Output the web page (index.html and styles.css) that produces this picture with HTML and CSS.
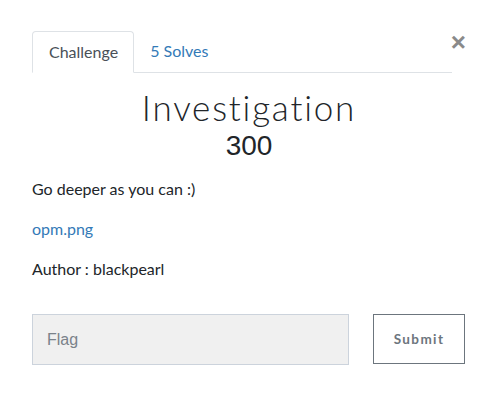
FILE: index.html
```html
<!DOCTYPE html>
<html>
<head>
<meta charset="utf-8">
<link rel="stylesheet" href="styles.css">
</head>
<body>
<div class="modal">
  <button class="close">&times;</button>
  <div class="tabs">
    <div class="tab active">Challenge</div>
    <div class="tab link">5 Solves</div>
  </div>
  <h2 class="title">Investigation</h2>
  <h3 class="value">300</h3>
  <p class="desc">Go deeper as you can :)</p>
  <p class="desc"><a class="file" href="#">opm.png</a></p>
  <p class="desc">Author : blackpearl</p>
  <div class="form">
    <input class="flag" type="text" placeholder="Flag">
    <button class="submit">Submit</button>
  </div>
</div>
</body>
</html>
```
FILE: styles.css
```css
html, body { margin: 0; padding: 0; background: #fff; }
body { width: 497px; height: 414px; font-family: Lato, "Open Sans", sans-serif; color: #212529; }
.modal { position: relative; padding: 31px 31px 0 32px; width: 434px; }
.close { position: absolute; right: 31px; top: 29px; border: 0; background: none; padding: 0; font-size: 26px; line-height: 26px; font-weight: 700; color: #8a8a8a; font-family: "Liberation Sans", Arial, sans-serif; }
.tabs { display: flex; border-bottom: 1px solid #dee2e6; height: 41px; width: 420px; }
.tab { font-size: 16px; line-height: 40px; padding: 0 16px; height: 40px; }
.tab.active { color: #495057; border: 1px solid #dee2e6; border-bottom: 1px solid #fff; border-radius: 4px 4px 0 0; background: #fff; margin-bottom: -1px; padding: 0 15px 0 16px; }
.tab.link { color: #337ab7; padding-left: 16px; }
.title { margin: 14px 0 0 0; text-align: center; font-family: Lato, sans-serif; font-weight: 300; font-size: 35px; letter-spacing: 1.8px; line-height: 40px; color: #212529; }
.value { margin: 1px 0 0 0; text-align: center; font-family: "Liberation Sans", Arial, sans-serif; font-weight: 400; font-size: 28px; line-height: 36px; color: #212529; }
.desc { margin: 12px 0 0 0; font-size: 16px; line-height: 26px; }
.desc + .desc { margin-top: 14px; }
.file { color: #337ab7; text-decoration: none; }
.form { display: flex; margin-top: 32px; width: 433px; }
.flag { flex: 0 0 auto; width: 317px; height: 51px; box-sizing: border-box; border: 1px solid #ccd3dc; background: #f0f0f0; padding: 0 14px; font-family: "Liberation Sans", Arial, sans-serif; font-size: 16px; color: #495057; margin: 0; border-radius: 0; }
.flag::placeholder { color: #7a828a; }
.submit { flex: 0 0 auto; margin: 0 0 0 24px; width: 92px; height: 50px; box-sizing: border-box; border: 1px solid #6c757d; background: #fff; font-family: Lato, sans-serif; font-weight: 700; font-size: 13.5px; letter-spacing: 1.4px; color: #6c757d; padding: 0; }
```
